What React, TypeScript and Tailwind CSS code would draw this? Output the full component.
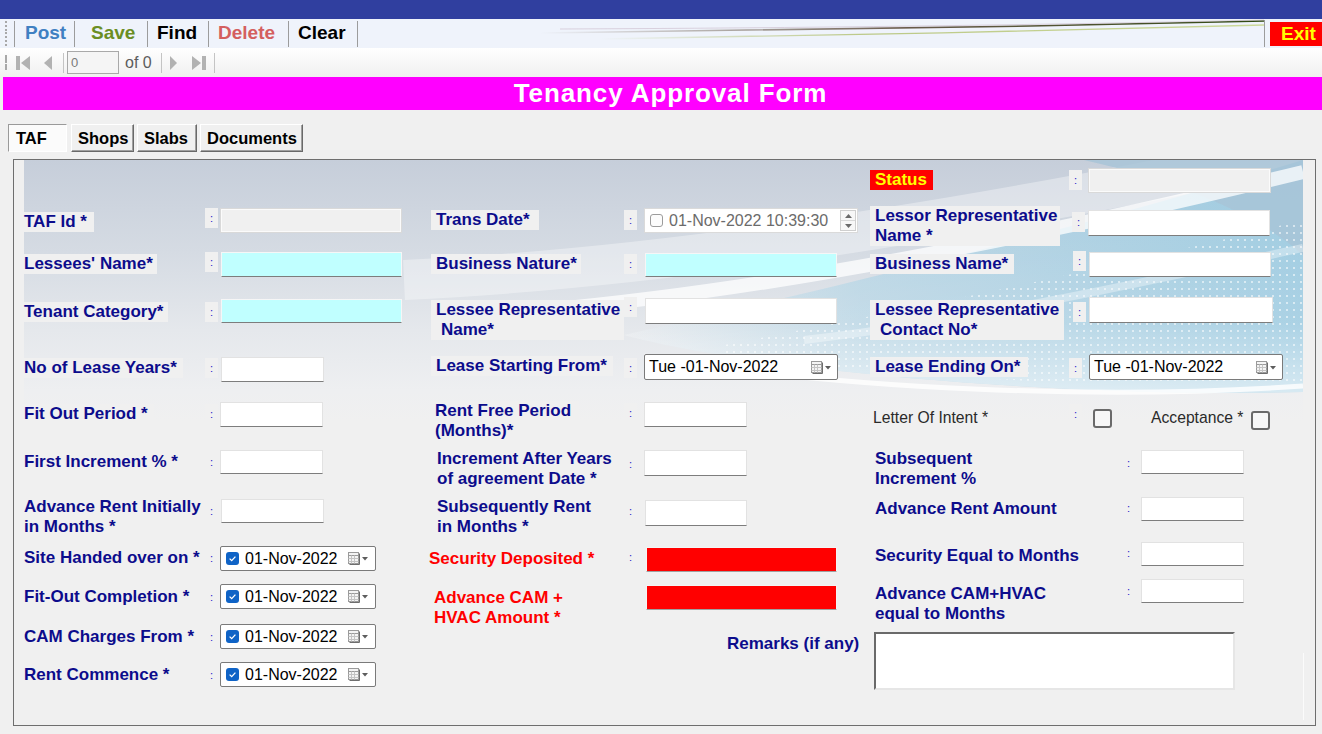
import React from "react";

const BOX_W = "shrink-0 bg-white border border-[#e2e2e2] border-b-[#7d7d7d]";
const BOX_CYAN = "shrink-0 bg-[#c0ffff] border border-[#f6f6f6] border-b-[#7d7d7d]";
const BOX_RED = "shrink-0 bg-[#ff0000] border border-[#f4f4f4] border-b-[#a0a0a0]";
const BOX_DIS = "shrink-0 bg-[#f0f0f0] border border-[#d9d9d9] shadow-[inset_0_0_0_1px_#fbfbfb]";

function Colon({ className = "" }: { className?: string }) {
  return (
    <div
      className={
        "w-[13px] h-[20px] shrink-0 bg-[#f0f0f0] flex items-center justify-center text-[11px] leading-none text-[#2323c8] " +
        className
      }
    >
      :
    </div>
  );
}

function Lbl({ children, className = "" }: { children: React.ReactNode; className?: string }) {
  return (
    <div
      className={
        "inline-block text-[17px] leading-[20px] font-bold text-[#0c0c8c] bg-[#f0f0f0] whitespace-nowrap " +
        className
      }
    >
      {children}
    </div>
  );
}

function CalIcon() {
  return (
    <svg width="21" height="13" viewBox="0 0 21 13">
      <rect x="0.5" y="0.5" width="10" height="11" fill="#f4f4f4" stroke="#9a9a9a" />
      <line x1="0.5" y1="3.5" x2="10.5" y2="3.5" stroke="#9a9a9a" />
      <line x1="3.5" y1="3.5" x2="3.5" y2="11.5" stroke="#c4c4c4" />
      <line x1="6.5" y1="3.5" x2="6.5" y2="11.5" stroke="#c4c4c4" />
      <line x1="0.5" y1="6.5" x2="10.5" y2="6.5" stroke="#c4c4c4" />
      <line x1="0.5" y1="9.5" x2="10.5" y2="9.5" stroke="#c4c4c4" />
      <line x1="11.5" y1="1.5" x2="11.5" y2="12.5" stroke="#6e6e6e" />
      <line x1="1.5" y1="12.5" x2="11.5" y2="12.5" stroke="#6e6e6e" />
      <path d="M14 5 L20 5 L17 8.5 Z" fill="#5d5d5d" />
    </svg>
  );
}

function CheckDate({ className = "" }: { className?: string }) {
  return (
    <div
      className={
        "shrink-0 w-[156px] h-[25px] bg-white border border-[#7a7a7a] rounded-[2px] flex items-center " + className
      }
    >
      <div className="ml-[5px] w-[13px] h-[13px] rounded-[3px] bg-[#0f63c6] flex items-center justify-center">
        <svg width="9" height="9" viewBox="0 0 9 9">
          <path d="M1.6 4.6 L3.7 6.6 L7.4 2.6" stroke="white" strokeWidth="1.3" fill="none" />
        </svg>
      </div>
      <span className="ml-[6px] text-[16px] leading-none text-black">01-Nov-2022</span>
      <div className="ml-auto mr-[6px] flex items-center">
        <CalIcon />
      </div>
    </div>
  );
}

function DayDate({ className = "" }: { className?: string }) {
  return (
    <div
      className={
        "shrink-0 w-[194px] h-[26px] bg-white border border-[#7a7a7a] rounded-[2px] flex items-center " + className
      }
    >
      <span className="ml-[4px] text-[16px] leading-none text-black">Tue -01-Nov-2022</span>
      <div className="ml-auto mr-[5px] flex items-center">
        <CalIcon />
      </div>
    </div>
  );
}

function Sep({ className = "" }: { className?: string }) {
  return <div className={"w-px shrink-0 bg-[#9c9c9c] " + className} />;
}

function Grip({ className = "" }: { className?: string }) {
  return (
    <div className={"w-[3px] shrink-0 flex flex-col justify-between " + className}>
      {Array.from({ length: 7 }).map((_, i) => (
        <div key={i} className="w-[2px] h-[2px] bg-[#a8a8a8]" />
      ))}
    </div>
  );
}

function Check() {
  return <div className="shrink-0 w-[19px] h-[19px] border-2 border-[#6a6a6a] rounded-[3px] bg-[#f7f7f7]" />;
}

function PanelBackground() {
  return (
    <svg
      className="absolute left-[10px] top-0"
      width="1279"
      height="262"
      viewBox="0 0 1279 262"
      preserveAspectRatio="none"
    >
      <defs>
        <linearGradient id="bgv" x1="0" y1="0" x2="0" y2="1">
          <stop offset="0" stopColor="#c6ceda" />
          <stop offset="0.35" stopColor="#d5dbe3" />
          <stop offset="0.65" stopColor="#e5e8ec" />
          <stop offset="0.88" stopColor="#eeeff1" />
          <stop offset="1" stopColor="#f0f0f0" />
        </linearGradient>
        <linearGradient id="blueh" x1="0" y1="0" x2="1" y2="0">
          <stop offset="0" stopColor="#a9cfe2" stopOpacity="0" />
          <stop offset="0.35" stopColor="#a9cfe2" stopOpacity="0.7" />
          <stop offset="1" stopColor="#9ccae0" stopOpacity="1" />
        </linearGradient>
        <linearGradient id="bluev" x1="0" y1="0" x2="0" y2="1">
          <stop offset="0" stopColor="#ffffff" stopOpacity="0" />
          <stop offset="0.7" stopColor="#ffffff" stopOpacity="0.15" />
          <stop offset="1" stopColor="#ffffff" stopOpacity="0.6" />
        </linearGradient>
        <pattern id="dots" x="0" y="0" width="7" height="7" patternUnits="userSpaceOnUse">
          <rect x="2" y="2" width="2" height="2" fill="#ffffff" opacity="0.55" />
        </pattern>
        <linearGradient id="doth" x1="0" y1="0" x2="1" y2="0">
          <stop offset="0" stopColor="#fff" stopOpacity="0" />
          <stop offset="0.5" stopColor="#fff" stopOpacity="1" />
          <stop offset="1" stopColor="#fff" stopOpacity="1" />
        </linearGradient>
        <mask id="dm">
          <rect x="0" y="0" width="1279" height="262" fill="url(#doth)" />
        </mask>
      </defs>
      <rect x="0" y="0" width="1279" height="262" fill="url(#bgv)" />
      <path d="M380 120 C 600 110, 900 70, 1279 -10" stroke="#ffffff" strokeOpacity="0.35" strokeWidth="40" fill="none" />
      <path
        d="M600 175 C 800 130, 1050 70, 1279 0 L 1279 232 C 1120 236, 930 225, 790 208 C 700 197, 640 186, 600 175 Z"
        fill="url(#blueh)"
      />
      <path
        d="M600 175 C 800 130, 1050 70, 1279 0 L 1279 232 C 1120 236, 930 225, 790 208 C 700 197, 640 186, 600 175 Z"
        fill="url(#bluev)"
      />
      <path d="M1060 0 L 1279 0 L 1279 95 C 1240 60, 1170 25, 1060 0 Z" fill="#a8c4d7" opacity="0.85" />
      <path d="M520 150 C 760 128, 1020 75, 1279 12" stroke="#ffffff" strokeOpacity="0.75" strokeWidth="14" fill="none" />
      <path
        d="M700 185 C 880 150, 1080 110, 1279 60 L 1279 225 C 1100 228, 900 220, 700 195 Z"
        fill="url(#dots)"
        mask="url(#dm)"
      />
      <path d="M620 196 C 820 230, 1080 240, 1279 226" stroke="#ffffff" strokeOpacity="0.8" strokeWidth="5" fill="none" />
      <path d="M780 180 C 950 160, 1130 120, 1279 88" stroke="#ffffff" strokeOpacity="0.35" strokeWidth="8" fill="none" />
    </svg>
  );
}

export default function App() {
  return (
    <div className="w-[1322px] h-[734px] overflow-hidden bg-[#f0f0f0] font-['Liberation_Sans',Arial,sans-serif]">
      <div className="h-[19px] bg-[#303f9f]" />

      {/* toolbar row 1 */}
      <div className="relative h-[29px] bg-[#eff3fb] flex">
        <svg className="absolute left-[540px] top-0" width="724" height="29" viewBox="0 0 724 29">
          <defs>
            <linearGradient id="tl" x1="0" y1="0" x2="1" y2="0">
              <stop offset="0" stopColor="#6b5a48" stopOpacity="0" />
              <stop offset="0.5" stopColor="#5b4a38" stopOpacity="0.9" />
              <stop offset="1" stopColor="#2f4a10" stopOpacity="1" />
            </linearGradient>
            <linearGradient id="tg" x1="0" y1="0" x2="1" y2="0">
              <stop offset="0" stopColor="#b6c47a" stopOpacity="0" />
              <stop offset="0.4" stopColor="#b6c47a" stopOpacity="0.9" />
              <stop offset="1" stopColor="#c8d68e" stopOpacity="0.9" />
            </linearGradient>
          </defs>
          <path d="M0 14 C 200 12, 480 8, 724 2" stroke="url(#tl)" strokeWidth="1.6" fill="none" />
          <path d="M60 20 C 260 17, 520 12, 724 6" stroke="url(#tg)" strokeWidth="1.4" fill="none" />
          <path d="M20 10 C 260 9, 500 6, 724 1" stroke="#c9b9c9" strokeOpacity="0.6" strokeWidth="1" fill="none" />
        </svg>
        <Grip className="ml-[5px] mt-[2px] h-[25px]" />
        <Sep className="ml-[6px] mt-[2px] h-[26px]" />
        <div className="w-[59px] pl-[10px] flex items-center text-[19px] font-bold text-[#3f80c2]">Post</div>
        <Sep className="mt-[2px] h-[26px]" />
        <div className="w-[72px] pl-[16px] flex items-center text-[19px] font-bold text-[#6b8e23]">Save</div>
        <Sep className="mt-[2px] h-[26px]" />
        <div className="w-[60px] pl-[9px] flex items-center text-[19px] font-bold text-black">Find</div>
        <Sep className="mt-[2px] h-[26px]" />
        <div className="w-[79px] pl-[9px] flex items-center text-[19px] font-bold text-[#d45f5f]">Delete</div>
        <Sep className="mt-[2px] h-[26px]" />
        <div className="w-[68px] pl-[9px] flex items-center text-[19px] font-bold text-black">Clear</div>
        <Sep className="mt-[2px] h-[26px]" />
        <div className="flex-1" />
        <Sep className="mt-[1px] h-[27px]" />
        <div className="relative ml-[5px] mt-[3px] w-[52px] h-[24px] bg-[#ff0000] pl-[11px] flex items-center text-[19px] font-bold text-[#ffff00]">
          Exit
        </div>
      </div>

      {/* toolbar row 2 */}
      <div className="h-[29px] bg-gradient-to-b from-[#ffffff] to-[#f0f0f0] flex items-center">
        <Grip className="ml-[5px] h-[16px]" />
        <svg className="ml-[8px] shrink-0" width="14" height="16" viewBox="0 0 14 16">
          <rect x="0" y="1" width="4" height="14" fill="#b2b2b2" />
          <path d="M14 1 L5 8 L14 15 Z" fill="#b2b2b2" />
        </svg>
        <svg className="ml-[13px] shrink-0" width="10" height="16" viewBox="0 0 10 16">
          <path d="M9 1 L1 8 L9 15 Z" fill="#b2b2b2" />
        </svg>
        <div className="ml-[10px] w-px h-[20px] bg-[#c4c4c4]" />
        <div className="ml-[3px] w-[52px] h-[23px] border border-[#a9a9a9] bg-[#f5f5f5] pl-[3px] flex items-center text-[13px] text-[#7a7a7a]">
          0
        </div>
        <span className="ml-[6px] text-[16px] text-[#5c5c5c]">of 0</span>
        <div className="ml-[9px] w-px h-[20px] bg-[#c4c4c4]" />
        <svg className="ml-[7px] shrink-0" width="9" height="16" viewBox="0 0 9 16">
          <path d="M1 1 L8 8 L1 15 Z" fill="#b2b2b2" />
        </svg>
        <svg className="ml-[14px] shrink-0" width="14" height="16" viewBox="0 0 14 16">
          <path d="M0 1 L9 8 L0 15 Z" fill="#b2b2b2" />
          <rect x="10" y="1" width="4" height="14" fill="#b2b2b2" />
        </svg>
        <div className="ml-[8px] w-px h-[20px] bg-[#c4c4c4]" />
      </div>

      {/* title */}
      <div className="ml-[3px] h-[33px] bg-[#ff00ff] flex items-center justify-center pl-[16px] text-white font-bold text-[26px] tracking-[0.9px]">
        Tenancy Approval Form
      </div>

      {/* tabs */}
      <div className="mt-[14px] ml-[8px] h-[28px] flex">
        <div className="w-[59px] pl-[7px] flex items-center text-[16.5px] font-bold text-black bg-[#fbfbfb] border border-t-[#9a9a9a] border-l-[#9a9a9a] border-r-white border-b-white">
          TAF
        </div>
        <div className="ml-[4px] w-[63px] pl-[6px] flex items-center text-[16.5px] font-bold text-black bg-[#f0f0f0] border border-t-white border-l-white border-r-[#696969] border-b-[#696969] shadow-[inset_-1px_-1px_0_#a0a0a0]">
          Shops
        </div>
        <div className="ml-[3px] w-[60px] pl-[6px] flex items-center text-[16.5px] font-bold text-black bg-[#f0f0f0] border border-t-white border-l-white border-r-[#696969] border-b-[#696969] shadow-[inset_-1px_-1px_0_#a0a0a0]">
          Slabs
        </div>
        <div className="ml-[3px] w-[103px] pl-[6px] flex items-center text-[16.5px] font-bold text-black bg-[#f0f0f0] border border-t-white border-l-white border-r-[#696969] border-b-[#696969] shadow-[inset_-1px_-1px_0_#a0a0a0]">
          Documents
        </div>
      </div>

      {/* panel */}
      <div className="relative mt-[7px] ml-[13px] w-[1303px] h-[567px] border border-[#6e6e6e] bg-[#f0f0f0]">
        <PanelBackground />
        <div className="absolute left-[1289px] top-[493px] w-px h-[67px] bg-[#fbfbfb]" />

        <div className="relative flex pl-[10px]">
          {/* LEFT column */}
          <div className="w-[404px] shrink-0 pt-[48px] flex flex-col">
            <div className="flex items-start h-[44px]">
              <div className="w-[181px] shrink-0">
                <Lbl className="mt-[4px] pr-[7px]">TAF Id *</Lbl>
              </div>
              <Colon />
              <div className={BOX_DIS + " ml-[2px] w-[182px] h-[25px]"} />
            </div>
            <div className="flex items-start h-[47px]">
              <div className="w-[181px] shrink-0">
                <Lbl className="pr-[4px]">Lessees' Name*</Lbl>
              </div>
              <Colon />
              <div className={BOX_CYAN + " ml-[3px] w-[181px] h-[25px]"} />
            </div>
            <div className="flex items-start h-[57px]">
              <div className="w-[181px] shrink-0">
                <Lbl className="mt-[3px] pr-[4px]">Tenant Category*</Lbl>
              </div>
              <Colon className="mt-[3px]" />
              <div className={BOX_CYAN + " ml-[3px] w-[181px] h-[24px]"} />
            </div>
            <div className="flex items-start h-[46px]">
              <div className="w-[181px] shrink-0">
                <Lbl className="pr-[6px]">No of Lease Years*</Lbl>
              </div>
              <Colon className="mt-[2px]" />
              <div className={BOX_W + " ml-[3px] mt-[1px] w-[103px] h-[25px]"} />
            </div>
            <div className="flex items-start h-[48px]">
              <div className="w-[181px] shrink-0">
                <Lbl className="pr-[6px]">Fit Out Period *</Lbl>
              </div>
              <Colon className="mt-[2px]" />
              <div className={BOX_W + " ml-[2px] w-[103px] h-[25px]"} />
            </div>
            <div className="flex items-start h-[47px]">
              <div className="w-[181px] shrink-0">
                <Lbl className="mt-[1px] pr-[6px]">First Increment % *</Lbl>
              </div>
              <Colon className="mt-[2px]" />
              <div className={BOX_W + " ml-[2px] w-[103px] h-[24px]"} />
            </div>
            <div className="flex items-start h-[49px]">
              <div className="w-[181px] shrink-0">
                <Lbl className="pr-[2px]">
                  Advance Rent Initially
                  <br />
                  in Months *
                </Lbl>
              </div>
              <Colon className="mt-[4px]" />
              <div className={BOX_W + " ml-[3px] mt-[2px] w-[103px] h-[24px]"} />
            </div>
            <div className="flex items-start h-[38px]">
              <div className="w-[181px] shrink-0">
                <Lbl className="mt-[2px]">Site Handed over on *</Lbl>
              </div>
              <Colon className="mt-[2px]" />
              <CheckDate className="ml-[2px]" />
            </div>
            <div className="flex items-start h-[40px]">
              <div className="w-[181px] shrink-0">
                <Lbl className="mt-[3px] pr-[6px]">Fit-Out Completion *</Lbl>
              </div>
              <Colon className="mt-[3px]" />
              <CheckDate className="ml-[2px]" />
            </div>
            <div className="flex items-start h-[38px]">
              <div className="w-[181px] shrink-0">
                <Lbl className="mt-[3px] pr-[6px]">CAM Charges From *</Lbl>
              </div>
              <Colon className="mt-[3px]" />
              <CheckDate className="ml-[2px]" />
            </div>
            <div className="flex items-start h-[38px]">
              <div className="w-[181px] shrink-0">
                <Lbl className="mt-[3px] pr-[6px]">Rent Commence *</Lbl>
              </div>
              <Colon className="mt-[3px]" />
              <CheckDate className="ml-[2px]" />
            </div>
          </div>

          {/* MIDDLE column */}
          <div className="w-[438px] shrink-0 pt-[48px] flex flex-col">
            <div className="flex items-start h-[44px]">
              <div className="w-[196px] shrink-0">
                <Lbl className="ml-[3px] pl-[5px] pr-[9px]">Trans Date*</Lbl>
              </div>
              <Colon className="mt-[2px]" />
              <div className="shrink-0 ml-[7px] w-[214px] h-[25px] bg-white border border-[#dadada] flex items-center">
                <div className="ml-[5px] w-[13px] h-[13px] border border-[#9c9c9c] rounded-[3px] bg-[#fcfcfc]" />
                <span className="ml-[6px] text-[16px] leading-none text-[#6b6b6b]">01-Nov-2022 10:39:30</span>
                <div className="ml-auto mr-px w-[16px] h-[21px] border border-[#cfcfcf] bg-[#f7f7f7] flex flex-col">
                  <div className="flex-1 flex items-center justify-center border-b border-[#d8d8d8]">
                    <svg width="7" height="4" viewBox="0 0 7 4">
                      <path d="M0 4 L3.5 0 L7 4 Z" fill="#6a6a6a" />
                    </svg>
                  </div>
                  <div className="flex-1 flex items-center justify-center">
                    <svg width="7" height="4" viewBox="0 0 7 4">
                      <path d="M0 0 L3.5 4 L7 0 Z" fill="#6a6a6a" />
                    </svg>
                  </div>
                </div>
              </div>
            </div>
            <div className="flex items-start h-[45px]">
              <div className="w-[196px] shrink-0">
                <Lbl className="ml-[3px] pl-[5px] pr-[4px]">Business Nature*</Lbl>
              </div>
              <Colon className="mt-[2px]" />
              <div className={BOX_CYAN + " ml-[8px] mt-[1px] w-[192px] h-[24px]"} />
            </div>
            <div className="flex items-start h-[57px]">
              <div className="w-[196px] shrink-0">
                <Lbl className="ml-[3px] mt-[3px] pl-[5px] w-[193px]">
                  Lessee Representative
                  <br />
                  <span className="pl-[5px]">Name*</span>
                </Lbl>
              </div>
              <Colon />
              <div className={BOX_W + " ml-[8px] mt-[1px] w-[192px] h-[26px]"} />
            </div>
            <div className="flex items-start h-[47px]">
              <div className="w-[196px] shrink-0">
                <Lbl className="ml-[3px] mt-[2px] pl-[5px] pr-[6px]">Lease Starting From*</Lbl>
              </div>
              <Colon className="mt-[4px]" />
              <DayDate className="ml-[7px]" />
            </div>
            <div className="flex items-start h-[48px]">
              <div className="w-[196px] shrink-0">
                <Lbl className="ml-[3px] pl-[4px] pr-[8px]">
                  Rent Free Period
                  <br />
                  (Months)*
                </Lbl>
              </div>
              <Colon className="mt-[2px]" />
              <div className={BOX_W + " ml-[7px] mt-[1px] w-[103px] h-[25px]"} />
            </div>
            <div className="flex items-start h-[48px]">
              <div className="w-[196px] shrink-0">
                <Lbl className="ml-[3px] pl-[6px]">
                  Increment After Years
                  <br />
                  of agreement Date *
                </Lbl>
              </div>
              <Colon className="mt-[5px]" />
              <div className={BOX_W + " ml-[7px] mt-[1px] w-[103px] h-[26px]"} />
            </div>
            <div className="flex items-start h-[50px]">
              <div className="w-[196px] shrink-0">
                <Lbl className="ml-[3px] pl-[6px] pr-[8px]">
                  Subsequently Rent
                  <br />
                  in Months *
                </Lbl>
              </div>
              <Colon className="mt-[4px]" />
              <div className={BOX_W + " ml-[8px] mt-[3px] w-[102px] h-[26px]"} />
            </div>
            <div className="flex items-start h-[38px]">
              <div className="w-[196px] shrink-0">
                <Lbl className="mt-[1px] pl-[1px] pr-[8px] text-[#ff0000]">Security Deposited *</Lbl>
              </div>
              <Colon />
              <div className={BOX_RED + " ml-[9px] w-[191px] h-[25px]"} />
            </div>
            <div className="flex items-start h-[49px]">
              <div className="w-[196px] shrink-0">
                <Lbl className="ml-[6px] mt-[3px] pr-[8px] text-[#ff0000]">
                  Advance CAM +
                  <br />
                  HVAC Amount *
                </Lbl>
              </div>
              <div className="w-[13px] shrink-0" />
              <div className={BOX_RED + " ml-[9px] w-[191px] h-[25px]"} />
            </div>
            <div className="flex items-start">
              <Lbl className="ml-[299px]">Remarks (if any)</Lbl>
            </div>
          </div>

          {/* RIGHT column */}
          <div className="w-[437px] shrink-0 pt-[8px] flex flex-col">
            <div className="flex items-start h-[38px]">
              <div className="w-[204px] shrink-0">
                <div className="inline-block ml-[4px] mt-[2px] h-[20px] pl-[5px] pr-[6px] bg-[#ff0000] text-[17px] leading-[20px] font-bold text-[#ffff00]">
                  Status
                </div>
              </div>
              <Colon className="-ml-px mt-[2px]" />
              <div className={BOX_DIS + " ml-[6px] w-[183px] h-[25px]"} />
            </div>
            <div className="flex items-start h-[45px]">
              <div className="w-[204px] shrink-0">
                <Lbl className="ml-[4px] pl-[5px] w-[190px]">
                  Lessor Representative
                  <br />
                  Name *
                </Lbl>
              </div>
              <Colon className="ml-[2px] mt-[6px]" />
              <div className={BOX_W + " ml-[3px] mt-[4px] w-[182px] h-[26px]"} />
            </div>
            <div className="flex items-start h-[46px]">
              <div className="w-[204px] shrink-0">
                <Lbl className="ml-[4px] mt-[3px] pl-[5px] pr-[6px]">Business Name*</Lbl>
              </div>
              <Colon className="ml-[3px]" />
              <div className={BOX_W + " ml-[3px] mt-[1px] w-[182px] h-[25px]"} />
            </div>
            <div className="flex items-start h-[57px]">
              <div className="w-[204px] shrink-0">
                <Lbl className="ml-[4px] mt-[3px] pl-[5px] w-[194px]">
                  Lessee Representative
                  <br />
                  <span className="pl-[5px]">Contact No*</span>
                </Lbl>
              </div>
              <Colon className="ml-[3px] mt-[5px]" />
              <div className={BOX_W + " ml-[3px] w-[184px] h-[26px]"} />
            </div>
            <div className="flex items-start h-[55px]">
              <div className="w-[204px] shrink-0">
                <Lbl className="ml-[4px] mt-[3px] pl-[5px] pr-[8px]">Lease Ending On*</Lbl>
              </div>
              <Colon className="-ml-px mt-[4px]" />
              <DayDate className="ml-[7px] w-[184px]" />
            </div>
            <div className="flex items-start h-[40px]">
              <div className="w-[203px] shrink-0 pl-[7px] -mt-px text-[15.7px] leading-[20px] text-[#2a2a2a]">
                Letter Of Intent *
              </div>
              <Colon className="-mt-[5px]" />
              <div className="ml-[11px]">
                <Check />
              </div>
              <div className="ml-[39px] w-[100px] shrink-0 -mt-px text-[15.7px] leading-[20px] text-[#2a2a2a]">
                Acceptance *
              </div>
              <div className="mt-[2px]">
                <Check />
              </div>
            </div>
            <div className="flex items-start h-[48px]">
              <div className="w-[256px] shrink-0">
                <Lbl className="ml-[4px] pl-[5px] pr-[6px]">
                  Subsequent
                  <br />
                  Increment %
                </Lbl>
              </div>
              <Colon className="mt-[4px]" />
              <div className={BOX_W + " ml-[6px] mt-[1px] w-[103px] h-[24px]"} />
            </div>
            <div className="flex items-start h-[45px]">
              <div className="w-[256px] shrink-0">
                <Lbl className="ml-[4px] mt-[2px] pl-[5px] pr-[6px]">Advance Rent Amount</Lbl>
              </div>
              <Colon className="mt-[1px]" />
              <div className={BOX_W + " ml-[6px] w-[103px] h-[24px]"} />
            </div>
            <div className="flex items-start h-[36px]">
              <div className="w-[256px] shrink-0">
                <Lbl className="ml-[4px] mt-[4px] pl-[5px] pr-[6px]">Security Equal to Months</Lbl>
              </div>
              <Colon className="mt-[1px]" />
              <div className={BOX_W + " ml-[6px] w-[103px] h-[24px]"} />
            </div>
            <div className="flex items-start h-[53px]">
              <div className="w-[256px] shrink-0">
                <Lbl className="ml-[4px] mt-[6px] pl-[5px] pr-[6px]">
                  Advance CAM+HVAC
                  <br />
                  equal to Months
                </Lbl>
              </div>
              <Colon className="mt-[3px]" />
              <div className={BOX_W + " ml-[6px] mt-[1px] w-[103px] h-[24px]"} />
            </div>
            <div className="ml-[8px] mt-px w-[361px] h-[58px] bg-white border-2 border-t-[#6a6a6a] border-l-[#6a6a6a] border-r-[#e6e6e6] border-b-[#e6e6e6]" />
          </div>
        </div>
      </div>
    </div>
  );
}
